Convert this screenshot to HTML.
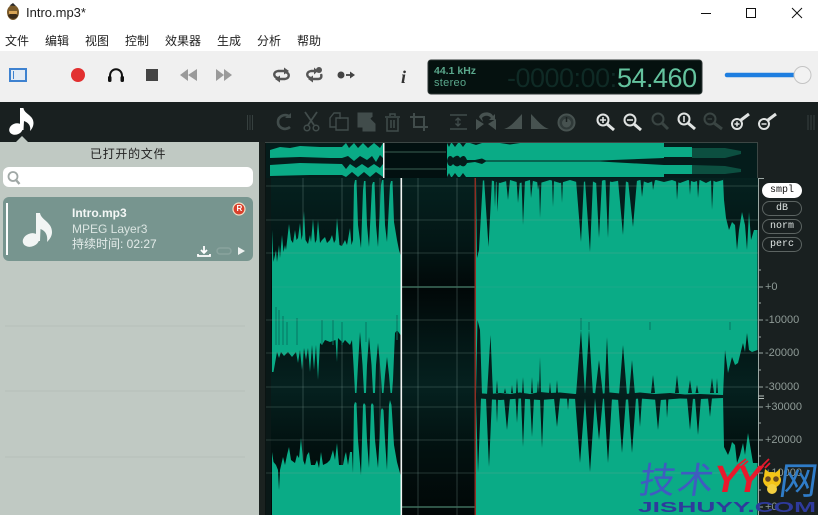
<!DOCTYPE html>
<html><head><meta charset="utf-8"><style>
html,body{margin:0;padding:0;background:#fff}
#p{position:relative;width:818px;height:515px;overflow:hidden;background:#fff;font-family:"Liberation Sans","Noto Sans CJK SC",sans-serif}
.t{position:absolute;white-space:nowrap;line-height:1}
svg{position:absolute;left:0;top:0}
.m{font-size:12px;color:#222;top:35px}
.s{position:absolute;left:762px;width:38px;height:13px;border:1px solid #5c6462;border-radius:8px;color:#dfe5e3;font:10px/13px "Liberation Mono",monospace;text-align:center}
.a{font-size:11px;color:#8f9b97;left:765px}
</style></head><body><div id="p">
<svg width="818" height="515" viewBox="0 0 818 515">
<defs>
<linearGradient id="bg" gradientUnits="userSpaceOnUse" x1="0" y1="178" x2="0" y2="515">
<stop offset="0" stop-color="#05211f"/><stop offset=".2" stop-color="#031615"/><stop offset=".33" stop-color="#010808"/><stop offset=".48" stop-color="#031615"/><stop offset=".62" stop-color="#05211f"/><stop offset=".8" stop-color="#021110"/><stop offset="1" stop-color="#010707"/>
</linearGradient>
</defs>
<rect x="0" y="51" width="818" height="51" fill="#f0f0f0"/>
<rect x="0" y="102" width="818" height="413" fill="#192020"/>
<rect x="0" y="142" width="259" height="373" fill="#c0c9c3"/>
<path d="M16 142L22 136L28 142Z" fill="#c0c9c3"/>
<path d="M5 326H245M5 391H245M5 457H245" stroke="#b6c0ba" stroke-width="1"/>
<rect x="3" y="167" width="250" height="20" rx="6" fill="#fff"/>
<circle cx="13" cy="176.500" r="4.500" fill="none" stroke="#a0a8a6" stroke-width="1.800"/><path d="M16 180L19.500 184" stroke="#a0a8a6" stroke-width="2.400"/>
<rect x="3" y="197" width="250" height="64" rx="6" fill="#77958f"/>
<rect x="6" y="203" width="2" height="52" fill="#fff"/>
<g fill="#f2f5f4"><ellipse cx="31" cy="240" rx="8.500" ry="6.500" transform="rotate(-22 31 240)"/><path d="M36 213L40 213C41 220 52 222 52 232C52 236 50 239 47 242C48 236 46 231 40.500 229L40 241L36 241Z"/></g>
<circle cx="239" cy="209" r="6" fill="#d9402c" stroke="#f3e0c8" stroke-width="1.200"/>
<path d="M198 254V256H210V254M204 246V253M201 250L204 253L207 250" fill="none" stroke="#fff" stroke-width="1.800"/>
<rect x="217" y="248" width="14" height="6" rx="3" fill="none" stroke="#8aa39e" stroke-width="1.500"/>
<path d="M238 247L245 251L238 255Z" fill="#eef2f1"/>
<rect x="259" y="142" width="7" height="373" fill="#1b2220"/>
<rect x="265" y="142" width="493" height="373" fill="#0b1413"/>
<rect x="271" y="178" width="487" height="337" fill="url(#bg)"/>
<rect x="266" y="178" width="5" height="337" fill="#0a1817"/>
<path d="M303 178V515M342 178V515M380 178V515M418 178V515M457 178V515" stroke="#80a098" stroke-opacity=".32" stroke-width="1"/>
<!-- left block -->
<path fill="#0aab86" d="M272 372L272 230L273.500 262L276 250L277 262L279 245L280 258L282 235L283.500 252L285 245L286 250L289 224L291 240L293 243L295 230L296.500 240L298 238L300 223L301.500 240L302.500 235L304 211L305.500 240L308 244L310 235L311 242L313 219L315 243L316.500 240L318 220L320 243L322 240L325 237L327 243L330 240L332 235L334 243L335.500 240L337 218L339.500 245L342 246L345 240L347 245L350 228L351.500 245L353 240L354 185L355 180L356.500 180L358 225L361 248L363 190L364 181L365.500 181L367 225L369 247L372 185L373 182L374.500 182L376 225L378 247L381 185L382 180L383.500 180L385 225L387 242L390 185L391 181L392.500 181L394 222L397 240L399 250L400.500 255L400.500 335L397 330L395 333L393 380L392 393L390.500 393L389 375L387 357L385 375L383.500 393L382 393L380.500 370L378 343L376 365L375 393L373 393L371.500 365L369 337L367 365L366 393L364 393L362.500 365L360 332L358 365L356.500 393L355 393L353.500 365L352 340L350 345L345 340L343 343L338 338L337 362L335.500 340L330 342L325 340L322 345L320 343L318 380L316 345L314 370L312 345L310 372L308 348L306 360L304 348L302 370L300 350L298 363L296 352L292 357L288 352L284 356L281 352L279 358L277 352L273.500 372Z"/>
<path fill="#0aab86" d="M272 515L272 452L273.500 462L276 465L278 470L279 490L280 470L283 457L285 465L287 455L289 447L291 460L295 463L297 455L299 458L301 438L303 460L305 465L307 455L309 452L311 465L315 465L317 460L319 468L321 452L323 465L327 463L330 460L333 450L335 460L337 443L339 465L343 465L345 455L346 452L348 465L350 452L352 452L353 473L354 405L355 402L356.500 403L358 440L361 475L363 405L364 403L365.500 405L367 440L369 468L371 405L372 403L373.500 405L375 440L378 468L381 410L382 408L383.500 410L385 440L387 470L389 405L390 400L391.500 405L394 445L397 462L400.500 475L400.500 515Z"/>
<path d="M276 307V345M279 310V345M283 316V345M287 322V345M297 318V345M322 320V345M333 320V345M342 322V345M366 322V342M397 315V340" stroke="#077561" stroke-width="1"/>
<!-- right block -->
<rect x="476" y="178" width="281.500" height="337" fill="#0aab86"/>
<g fill="url(#bg)">
<path d="M476 178H723V180L716 182L712 180L706 183L700 180L694 182L688 180L680 183L672 180L664 182L656 180L648 183L640 180L630 183L622 180L612 182L604 180L596 183L590 180L580 183L570 180L560 183L550 180L540 183L530 180L520 183L510 180L500 183L490 180L476 181Z"/>
<path d="M476 178L477 258L479 250L483 178ZM484 178L488.500 247L492 178ZM494 180L495 207L496 180ZM496.500 180L497.500 212L499 180ZM506 180L508 200L510 180ZM516.500 180L518 203L520 180ZM521.500 180L523 225L525 180ZM530 180L531 198L533 180ZM537 180L538 190L540 180ZM539 180L540 218L541.500 180ZM552 180L553 207L554 180ZM561 180L562 203L563 180ZM576 180L581 242L584 180ZM585 180L590 252L593 180ZM596 180L599 238L602 180ZM605.500 180L608 238L610 180ZM618 180L623 235L626 180ZM628 180L633 227L637 180ZM640.500 180L642 197L644 180ZM652 180L653 190L655 180ZM676 180L677 200L678.500 180ZM689 180L690 195L691 180ZM697 180L698 198L699.500 180ZM711 180L712 210L713.500 180Z"/>
<path d="M723 178H757.500V230L754 230L751 240L749 212L747 250L745 225L742 212L739 230L737 250L735 225L732 222L729 230L726 218L724 200Z"/>
<path d="M476 393L490 394L500 393L510 394L520 392.500L530 394L540 392L550 393L560 392.500L575 394L590 392.500L600 394L610 392.500L625 394L640 392.500L655 394L670 393L685 394.500L700 394L723 395V398L700 399L680 398.500L660 400L640 398.500L620 400L600 398.500L580 399L560 398.500L540 400L520 398.500L500 400L480 398.500H476Z"/>
<path d="M476 395L477.500 320L480 330L482 395ZM487 395L490.500 335L493 395ZM496 393L497 380L498 393ZM504 393L505 388L506 393ZM511 393L512 385L513 393ZM516 393L517 378L518 393ZM522 393L523 377L524 393ZM531 393L532 377L533 393ZM537 393L538 380L539 393ZM539 393L540 357L541 393ZM549 393L550 382L551 393ZM556 393L557 380L558 393ZM576 395L581 330L585 395ZM585 395L589 330L593 395ZM595 395L599 360L603 395ZM604.500 395L607 337L609.500 395ZM619 395L623 345L627 395ZM629 395L632 360L635 395ZM651 393L653 375L655 393ZM675 393L677 375L679 393ZM688 393L690 380L692 393ZM695.500 393L697 385L698.500 393ZM710 393L712 378L714 393ZM716 393L717 378L718 393Z"/>
<path d="M476 398L478 473L481 398ZM486 398L489 467L492 398ZM496 398L497 423L498 398ZM504 398L507 430L510 398ZM515.500 398L517 423L518.500 398ZM521 398L523 447L525 398ZM530 398L532 437L534 398ZM540 398L542 448L544 398ZM554 398L557 427L560 398ZM567 398L568 410L569 398ZM575 398L580 463L585 398ZM585 398L590 472L595 398ZM595 398L599 440L603 398ZM604 398L608 463L612 398ZM618 398L622 453L626 398ZM628 398L632 453L636 398ZM638 398L640 427L642 398ZM655 398L658 430L661 398ZM666 398L667 418L668.500 398ZM687 398L690 430L693 398ZM695 398L698 435L701 398ZM708 398L710 417L712 398Z"/>
<path d="M723 396L725 350L728 373L732 357L735 365L738 363L743 343L745 352L747 333L749 350L752 352L757.500 350V463L753 463L750 445L748 433L745 455L743 443L740 455L737 463L735 445L732 442L730 450L728 455L724 447Z"/>
</g>
<path d="M581 330V318M589 330V322M730 330V322M650 330V322" stroke="#077561" stroke-width="1"/>
<!-- horizontal grid -->
<path d="M266 186H758M266 220H758M266 253H758M266 320H758M266 353H758M266 387H758M266 407H758M266 440H758M266 473H758" stroke="#80a098" stroke-opacity=".28" stroke-width="1"/>
<path d="M402 287H475M402 507H475" stroke="#3f6e5c" stroke-width="1.500"/>
<path d="M272 287H400M476 287H758" stroke="#80a098" stroke-opacity=".15" stroke-width="1"/>
<rect x="400.500" y="178" width="1.600" height="337" fill="#f2f5f4"/>
<rect x="474.500" y="178" width="1.500" height="337" fill="#8c2f24"/>
<!-- overview -->
<rect x="266" y="143" width="492" height="35" fill="#041c1b"/>
<rect x="383" y="143" width="64" height="35" fill="#021010"/>
<path d="M384 152H446M384 169H446" stroke="#3b5f52" stroke-width="1"/>
<g fill="#0aab86">
<path d="M270 150L280 147L290 148L300 146L320 147L342 147L346 143L349 148L354 143L358 148L363 143L368 148L374 143L380 148L383 143V158L380 155L376 162L372 156L367 160L360 156L354 161L348 156L342 158H330L300 157L270 158Z"/>
<path d="M270 165L300 163L342 164L346 169L350 164L356 168L362 164L368 168L374 164L380 168L383 164V177L376 172L370 177L364 172L358 177L352 172L346 177L342 175H310L270 176Z"/>
<rect x="447" y="143" width="217" height="34"/>
<path d="M664 147H692V157H664ZM664 165H692V174H664Z"/>
</g>
<g fill="#041c1b">
<path d="M447 143L449 147L451 143ZM452 143L455 147L458 143ZM460 143L463 147L466 143ZM447 177L449 173L451 177ZM452 177L455 173L458 177ZM460 177L463 173L466 177ZM470 143L476 145L482 143ZM500 143L510 144.500L520 143Z"/>
<path d="M447 161C448 155 451 155 453 158C456 155 459 155 460 158C463 155 465 155 467 160L475 160L482 158.500L486 160.500H664V161.500H486L482 164L475 162L467 163C465 167 463 167 460 165C458 167 456 167 453 164C451 167 448 167 447 161Z"/>
<path d="M600 160.500L664 158V165L600 161.500Z"/>
</g>
<g fill="#0c4f40"><path d="M692 148H725L741 151V154L725 158H692Z"/><path d="M692 165L725 166L741 169V172L725 174H692Z"/></g>
<rect x="383" y="143" width="1.500" height="35" fill="#f2f5f4"/>
<path d="M265 142.500H757.500V178" fill="none" stroke="#3c4644"/>
<!-- axis -->
<path d="M758.500 178V515" stroke="#9ba7a3" stroke-width="1"/>
<path d="M758 178.500H764M758 287H763M758 320H763M758 353H763M758 387H763M758 407H763M758 440H763M758 473H763M758 507H763M758 270H761M758 303H761M758 337H761M758 370H761M758 423H761M758 456H761M758 490H761" stroke="#9ba7a3"/>
<path d="M758 396H764M758 398.500H764" stroke="#b5bfbb"/>
<!-- title/window -->
<path d="M7 12C7 8 10 5 13 5C16 5 19 8 19 12C19 17 16 20 13 20C10 20 7 17 7 12Z" fill="#7a5a2a"/><path d="M9.500 5.500L13 3L16 6Z" fill="#2a2a2a"/><path d="M9 11H17V13C17 15 15 17 13 17C11 17 9 15 9 13Z" fill="#d8a455"/><path d="M8 15C9 20 17 20 18 15L16 14H10Z" fill="#3a2a18"/>
<path d="M701 13.500H711" stroke="#111" stroke-width="1"/>
<rect x="746.500" y="8.500" width="9" height="9" fill="none" stroke="#111" stroke-width="1"/>
<path d="M792 8L802 18M802 8L792 18" stroke="#111" stroke-width="1"/>
<!-- toolbar -->
<rect x="10" y="69" width="16" height="12" fill="#e4ebf4" stroke="#3e82d0" stroke-width="2"/><path d="M13.500 71V79" stroke="#3e82d0"/>
<circle cx="78" cy="75" r="7" fill="#e23030"/>
<path d="M110 79V76C110 67 122 67 122 76V79" fill="none" stroke="#111" stroke-width="2"/><rect x="108" y="76" width="3.500" height="6" rx="1.500" fill="#111"/><rect x="120.500" y="76" width="3.500" height="6" rx="1.500" fill="#111"/>
<rect x="146" y="69" width="12" height="12" fill="#444"/>
<path d="M180 75L188 69V81ZM188 75L197 69V81Z" fill="#9a9a9a"/>
<path d="M216 69L224 75L216 81ZM224 69L232 75L224 81Z" fill="#9a9a9a"/>
<path d="M278 78C273 77 273 72 278 71H285" fill="none" stroke="#555" stroke-width="2.400"/><path d="M284 67.500L289 71L284 74.500Z" fill="#555"/><path d="M285 72C290 73 290 78 285 79H279" fill="none" stroke="#555" stroke-width="2.400"/><path d="M280 75.500L275 79L280 82.500Z" fill="#555"/>
<path d="M311 78C306 77 306 72 311 71H315" fill="none" stroke="#555" stroke-width="2.400"/><path d="M314 67.500L318 71L314 74.500Z" fill="#555"/><path d="M321 74C322 77 321 79 318 79H312" fill="none" stroke="#555" stroke-width="2.400"/><path d="M313 75.500L308 79L313 82.500Z" fill="#555"/><circle cx="319" cy="70" r="3" fill="#555"/>
<circle cx="341" cy="75" r="3.500" fill="#444"/><path d="M346 75H352" stroke="#444" stroke-width="1.800"/><path d="M350 71.500L355 75L350 78.500Z" fill="#444"/>
<!-- slider -->
<path d="M727 75H795" stroke="#1e7ee0" stroke-width="4.500" stroke-linecap="round"/>
<circle cx="802.500" cy="75" r="8.500" fill="#f2f2f2" stroke="#c4c4c4"/>
<!-- LCD -->
<rect x="428" y="60" width="274" height="34" rx="3" fill="#05110f" stroke="#2d3533"/>
<!-- top note -->
<g fill="#fff"><ellipse cx="16" cy="129" rx="7" ry="5.500" transform="rotate(-22 16 129)"/><path d="M20 108L23.500 108C24 114 33.500 115 33.500 123C33.500 126 32 129 30 131C31 126 29 123 24 121L23.500 130L20 130Z"/></g>
<!-- dark toolbar icons -->
<path d="M247.500 115V130M250 115V130M252.500 115V130M808 115V130M811 115V130M814 115V130" stroke="#36403f" stroke-width="1"/>
<g fill="none" stroke="#414c4b" stroke-width="2.600">
<path d="M290 117C285 113 278 116 278 122C278 128 285 131 290 127"/>
<path d="M285 118H291V113Z" fill="#414c4b" stroke="none"/>
<path d="M305 112L314 125M317 112L308 125" stroke-width="1.800"/><circle cx="307" cy="128" r="2.800" stroke-width="1.500"/><circle cx="316" cy="128" r="2.800" stroke-width="1.500"/>
<path d="M340 119V113H334L330 118V127H336" stroke-width="1.400"/><path d="M336 118H348V130H336Z" stroke-width="1.400"/>
<path d="M372 117V113H358V127H363" fill="#414c4b" stroke-width="1"/><path d="M363 118H369L375 124V131H363Z" fill="#414c4b" stroke-width="1"/>
<path d="M385 117H400M390 116V114H395V116M387 118V131H398V118M391 120V128M394 120V128" stroke-width="1.500"/>
<path d="M414 113V127H428M410 117H424V131" stroke-width="2"/>
<path d="M450 115H467M450 129H467" stroke-width="1.500"/><path d="M458 118V126M455.500 120.500L458 118L460.500 120.500M455.500 123.500L458 126L460.500 123.500" stroke-width="1.300"/>
</g>
<g fill="#475250">
<path d="M476 119L484 124L476 130ZM496 119L488 124L496 130Z"/><path d="M479 117C481 111 491 111 493 116L495 114V120H489L491 118C489 115 484 115 482 118L483 122Z"/>
<path d="M504 129C511 127 516 120 522 114V129Z"/>
<path d="M531 114C537 120 542 127 549 129H531Z"/>
</g>
<circle cx="566.500" cy="122.500" r="8" fill="#2f3938" stroke="#475250" stroke-width="2"/><circle cx="566.500" cy="123" r="4.500" fill="#475250"/><path d="M566.500 117V122" stroke="#1a2120" stroke-width="1.500"/>
<g fill="none" stroke="#e0e3e2" stroke-width="2">
<circle cx="603" cy="120" r="5.500"/><path d="M607 124L614 130" stroke-width="3"/><path d="M600 120H606M603 117V123" stroke-width="1.600"/>
<circle cx="630" cy="120" r="5.500"/><path d="M634 124L641 130" stroke-width="3"/><path d="M627 120H633" stroke-width="1.600"/>
<circle cx="684" cy="119" r="5.500"/><path d="M688 123L695 129" stroke-width="3"/><path d="M684 116V122" stroke-width="1.600"/>
<circle cx="737" cy="124" r="5"/><path d="M741 120L749 114" stroke-width="3"/><path d="M734.500 124H739.500M737 121.500V126.500" stroke-width="1.500"/>
<circle cx="764" cy="124" r="5"/><path d="M768 120L776 114" stroke-width="3"/><path d="M761.500 124H766.500" stroke-width="1.500"/>
</g>
<g fill="none" stroke="#3a4543" stroke-width="2">
<circle cx="658" cy="119" r="5.500"/><path d="M662 123L668 129" stroke-width="3"/>
<circle cx="710" cy="119" r="5.500"/><path d="M714 123L722 129" stroke-width="3"/><path d="M707.500 119H712" stroke-width="1.300"/>
</g>
</svg>

<div class="t" style="left:26px;top:6px;font-size:13px;color:#222">Intro.mp3*</div>
<div class="t m" style="left:5px">文件</div><div class="t m" style="left:45px">编辑</div><div class="t m" style="left:85px">视图</div><div class="t m" style="left:125px">控制</div><div class="t m" style="left:165px">效果器</div><div class="t m" style="left:217px">生成</div><div class="t m" style="left:257px">分析</div><div class="t m" style="left:297px">帮助</div>
<div class="t" style="left:401px;top:67px;font:italic bold 18px 'Liberation Serif',serif;color:#333">i</div>
<div class="t" style="left:434px;top:66px;font-size:10.500px;font-weight:bold;color:#5aa88c">44.1 kHz</div>
<div class="t" style="left:434px;top:78px;font-size:11px;color:#5aa88c;letter-spacing:.3px">stereo</div>
<div class="t" style="left:507px;top:65px;font-size:27px;color:#0f2a25;letter-spacing:-.5px">-0000:00:</div>
<div class="t" style="left:617px;top:65px;font-size:27px;color:#64c39e;letter-spacing:-.5px">54.460</div>
<div class="t" style="left:90px;top:148px;font-size:12px;letter-spacing:.7px;color:#222">已打开的文件</div>
<div class="t" style="left:72px;top:207px;font-size:12px;font-weight:bold;color:#f4f7f6">Intro.mp3</div>
<div class="t" style="left:72px;top:223px;font-size:12px;color:#dbe5e2">MPEG Layer3</div>
<div class="t" style="left:72px;top:238px;font-size:12px;color:#e4ecea">持续时间: 02:27</div>
<div class="t" style="left:236.500px;top:205px;font-size:8px;font-weight:bold;color:#fff">R</div>
<div class="s" style="top:183px;background:#fff;color:#111;border-color:#fff">smpl</div>
<div class="s" style="top:201px">dB</div><div class="s" style="top:219px">norm</div><div class="s" style="top:237px">perc</div>
<div class="t a" style="top:282px">+0</div><div class="t a" style="top:315px">-10000</div><div class="t a" style="top:348px">-20000</div><div class="t a" style="top:382px">-30000</div><div class="t a" style="top:402px">+30000</div><div class="t a" style="top:435px">+20000</div><div class="t a" style="top:468px">+10000</div><div class="t a" style="top:502px">+0</div>
<!-- watermark -->
<div class="t" style="left:640px;top:460px;font-size:36px;color:#3f5cc0;letter-spacing:2px;font-family:'Noto Sans CJK SC',sans-serif;transform:skewX(-8deg)">技术</div>
<div class="t" style="left:714px;top:461px;font-size:38px;font-style:italic;font-weight:bold;color:#e8192c;letter-spacing:-3px">YY</div>
<div class="t" style="left:780px;top:459px;font-size:38px;color:#2f7cc8;font-family:'Noto Sans CJK SC',sans-serif;transform:skewX(-8deg)">网</div>
<svg width="818" height="515" viewBox="0 0 818 515">
<path d="M737 466L746 459M741 467L748 461M762 466L769 459M765 468L770 463" stroke="#e8192c" stroke-width="1.800"/>
<ellipse cx="772" cy="480" rx="9" ry="8" fill="#f4c418"/><path d="M764 476L765 469L770 473M780 476L780 469L775 473" fill="#f4c418"/>
<circle cx="768" cy="479" r="2.800" fill="#6a4a20"/><circle cx="776" cy="479" r="2.800" fill="#6a4a20"/><ellipse cx="772" cy="489" rx="5" ry="5" fill="#f4d040"/>
</svg>
<div class="t" style="left:638px;top:500px;font-size:15px;font-weight:bold;color:#2e3a9c;transform-origin:0 0;transform:scaleX(1.750)">JISHUYY.COM</div>
</div></body></html>
